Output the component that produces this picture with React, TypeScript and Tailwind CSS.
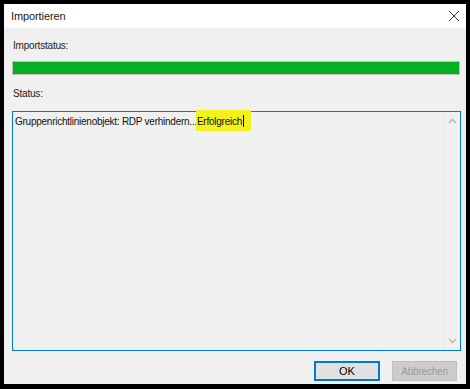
import React from "react";

function Chevron({ up }: { up?: boolean }) {
  return (
    <svg width="9" height="6" viewBox="0 0 9 6" className="block">
      <path
        d={up ? "M1 5 L4.5 1.5 L8 5" : "M1 1 L4.5 4.5 L8 1"}
        fill="none"
        stroke="#b4b4b4"
        strokeWidth="1.4"
      />
    </svg>
  );
}

export default function App() {
  return (
    <div
      className="w-[470px] h-[389px] bg-black pt-[4px] pl-[4px] pr-[4px] pb-[5px]"
      style={{ fontFamily: '"Liberation Sans", Arial, sans-serif' }}
    >
      <div className="w-full h-full bg-[#f0f0f0] flex flex-col">
        <div className="h-[24px] bg-white flex items-center justify-between pl-[7px] pr-[6px] shrink-0">
          <span className="text-[11px] tracking-[-0.1px] text-[#1a1a1a]">Importieren</span>
          <svg width="12" height="12" viewBox="0 0 12 12">
            <path d="M1 1 L11 11 M11 1 L1 11" stroke="#333" strokeWidth="1" />
          </svg>
        </div>
        <div className="flex-1 flex flex-col px-[8px]">
          <div className="h-[33px] flex items-center text-[10px] tracking-[-0.2px] text-[#222] pl-[1px] pt-[1px]">
            Importstatus:
          </div>
          <div className="h-[14px] w-[448px] border border-[#bcbcbc] bg-[#e6e6e6] p-0">
            <div className="h-full w-full bg-[#06b025]" />
          </div>
          <div className="h-[36px] flex items-center text-[10px] tracking-[-0.2px] text-[#222] pl-[1px] pt-[1px]">
            Status:
          </div>
          <div className="relative h-[240px] w-[449px] border border-[#0078d7] bg-[#f0f0f0] flex">
            <div className="flex-1 pl-[2px] pt-[2px] text-[10px] tracking-[-0.25px] text-[#111] leading-[15px] whitespace-nowrap">
              <span>Gruppenrichtlinienobjekt: RDP verhindern...</span>
              <span className="relative">
                <span className="absolute left-[-1px] right-[-9px] top-[-6px] bottom-[-4px] bg-[#f2f21c]" />
                <span className="relative">Erfolgreich</span>
              </span>
              <span className="relative inline-block w-[1px] h-[12px] bg-black align-[-2px] ml-[1px]" />
            </div>
            <div className="w-[17px] border-l border-[#e4e4e4] bg-[#f0f0f0] flex flex-col items-center justify-between py-[6px]">
              <Chevron up />
              <Chevron />
            </div>
          </div>
          <div className="flex justify-end gap-[12px] mt-[10px] pr-[1px]">
            <button className="w-[66px] h-[20px] border-2 border-[#0078d7] bg-[#e1e1e1] text-[11px] text-black flex items-center justify-center">
              OK
            </button>
            <button className="w-[65px] h-[20px] border border-[#bfbfbf] bg-[#cccccc] text-[10px] tracking-[-0.2px] text-[#9a9a9a] flex items-center justify-center">
              Abbrechen
            </button>
          </div>
        </div>
      </div>
    </div>
  );
}
